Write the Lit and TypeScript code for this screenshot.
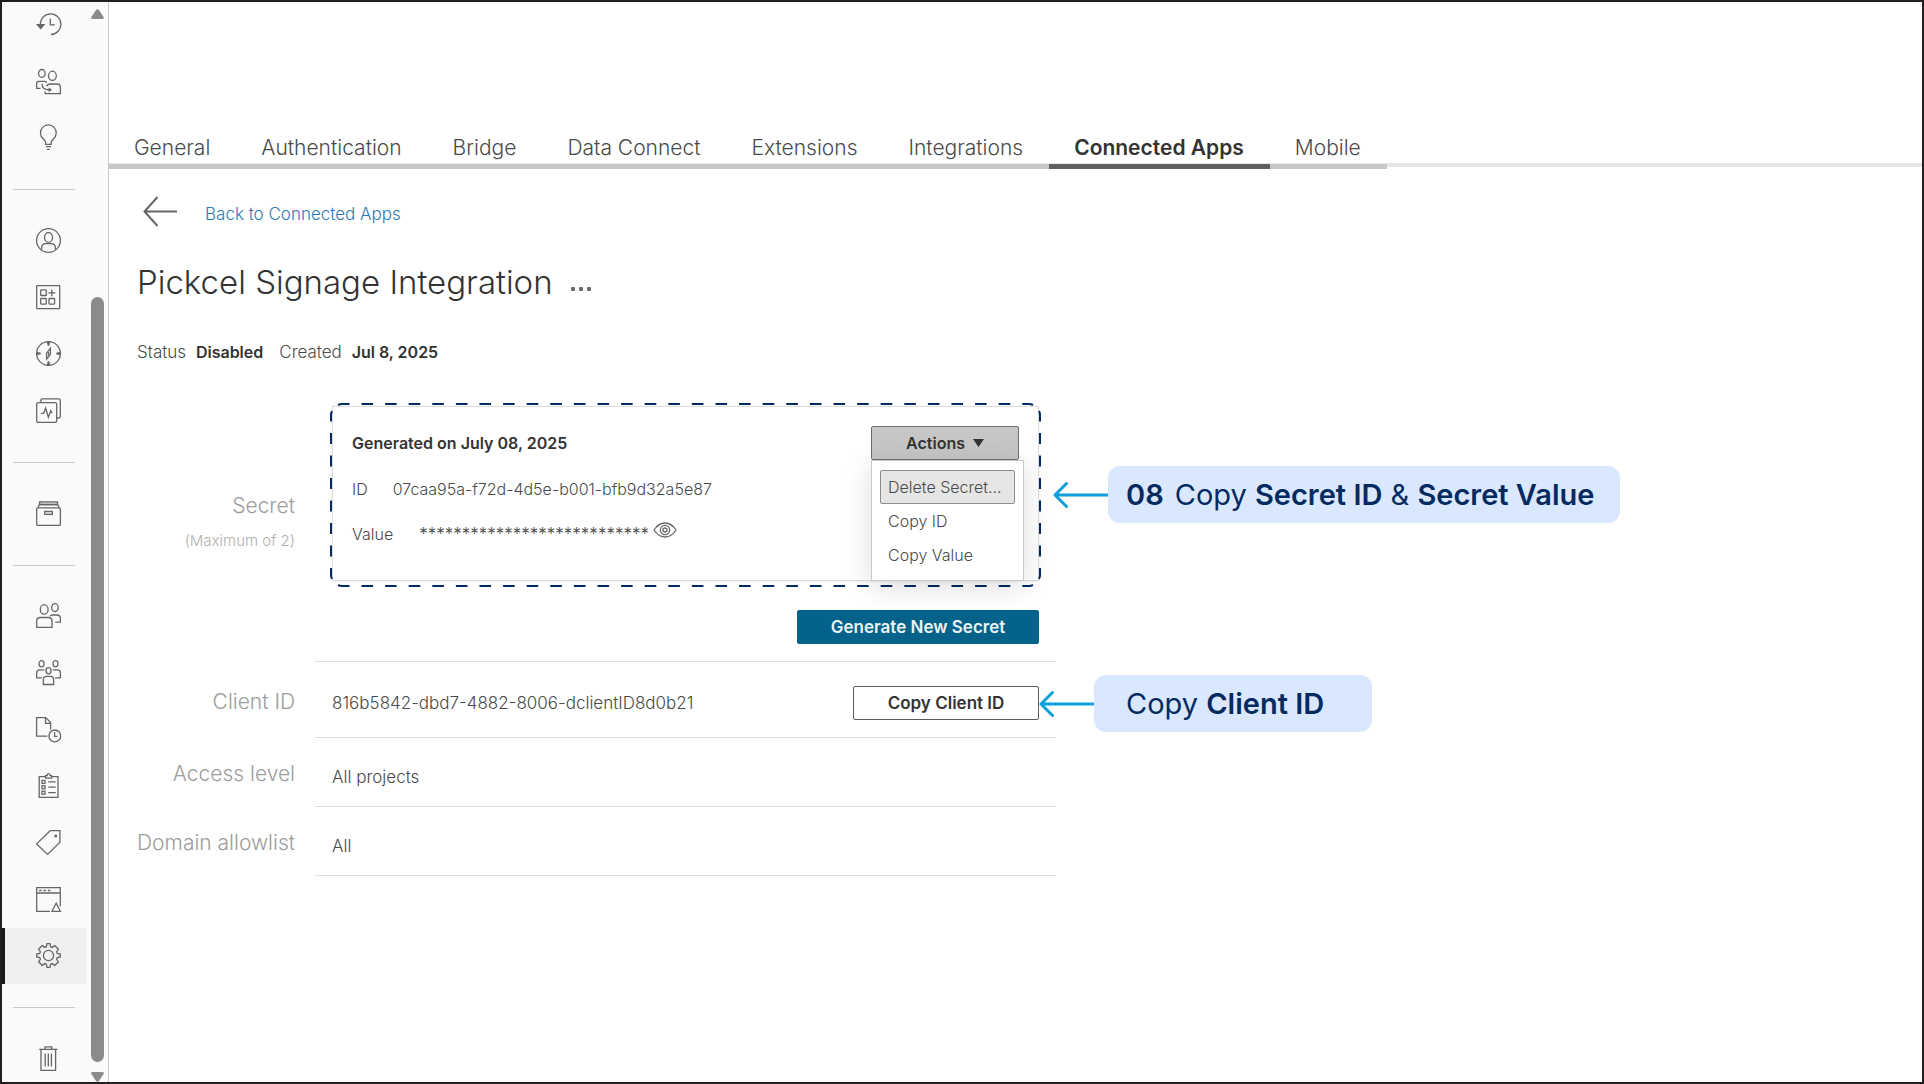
import { LitElement, html, svg, css, nothing, type TemplateResult } from "lit";
import { customElement, property } from "lit/decorators.js";
import { classMap } from "lit/directives/class-map.js";

const icons: Record<string, TemplateResult> = {
  recents: svg`<path d="M4.3 12A10.3 10.3 0 1 1 15 22.5M14.3 6.5v6.3h4.6"/><path class="solid" d="M0 12h9.4l-4.7 5.6z"/>`,
  shared: svg`<ellipse cx="5.8" cy="4.4" rx="3.3" ry="3.9"/><ellipse cx="16.4" cy="6.8" rx="3.9" ry="4.6"/><path d="M4.6 19.4H.6v-4.6q0-2.4 2.4-2.4h5.6q1.6 0 2.2 1.2M6.1 14.6Q5.6 20.8 13.6 20.8M10.6 17.2q.8-2.2 3.6-2.2h6.8q3.4 0 3.4 3.4v6.3H9.2v-2.3"/><path class="solid" d="M12.6 18.4l3.6 2.4-3.6 2.4z"/>`,
  bulb: svg`<path d="M9.6 19.3h5.6v-2.1q.3-1.4 2.3-3.4a7.9 7.9 0 1 0-10.3 0q2.1 2 2.4 3.4zM9.8 21.7h5.2M11 24.3h2.8"/>`,
  user: svg`<circle cx="12.5" cy="12.5" r="11.9"/><ellipse cx="12.5" cy="9.4" rx="4" ry="4.9"/><path d="M5.6 21.8v-1.9q0-4.2 4.2-4.2h5.4q4.2 0 4.2 4.2v1.9"/>`,
  collections: svg`<rect x=".7" y=".7" width="23" height="23" rx=".6"/><rect x="4.7" y="4.9" width="5.6" height="5.6" rx=".5"/><rect x="4.7" y="13.5" width="5.6" height="5.6" rx=".5"/><rect x="13" y="13.5" width="5.6" height="5.6" rx=".5"/><path d="M12.4 7.8h6.9M15.8 4.4v6.8"/>`,
  compass: svg`<circle cx="12.5" cy="12.5" r="11.9"/><path d="M14.3 7.3l.2 5.9-3.8 4.7-.2-5.8zM12.5 11v3.2"/><path class="solid" d="M10.7.6h3.6l-1 4.2h-1.6zM10.7 24.4h3.6l-1-4.2h-1.6zM.6 10.7v3.6l4.2-1v-1.6zM24.4 10.7v3.6l-4.2-1v-1.6z"/>`,
  pulse: svg`<rect x=".7" y="4.6" width="20" height="19.8" rx="1.6"/><path d="M4.9 4.6V2.2Q4.9.8 6.3.8h16.3q1.7 0 1.7 1.7v16q0 1.5-1.6 1.5h-2M5 15.4h2.6l2-5.4 2.8 9.2 2.4-6.4.8 1.8h.8"/>`,
  archive: svg`<rect x=".7" y="6.9" width="23.7" height="17.5" rx="1"/><path d="M2 6.7l1.3-3h18.5l1.3 3"/><path class="tint" d="M3.6.8h17.9v2.7H3.6z"/><rect class="tint" x="8.7" y="10.4" width="7.6" height="3"/>`,
  users: svg`<ellipse cx="8.2" cy="6.4" rx="3.9" ry="4.7"/><ellipse cx="18.9" cy="4.6" rx="3.3" ry="3.9"/><path d="M.7 24.4v-6.3q0-3.6 3.6-3.6h8.1q3.6 0 3.6 3.6v6.3zM13.9 13.3q.7-1.3 2.6-1.3h4.6q3.3 0 3.3 3.3v3.9h-5.2"/>`,
  groups: svg`<ellipse cx="5.5" cy="3.8" rx="2.5" ry="3.1"/><ellipse cx="19.5" cy="3.8" rx="2.5" ry="3.1"/><ellipse cx="12.5" cy="10.8" rx="2.5" ry="3.1"/><path d="M6 17.8H.7v-4.9q0-3 3-3h4.7M19 17.8h5.4v-4.9q0-3-3-3h-4.7M7.4 24.5v-4.7q0-3.4 3.2-3.4h3.8q3.2 0 3.2 3.4v4.7z"/>`,
  schedules: svg`<path d="M11.4 19.2H.6V.6h9.2l4.8 4.9v7M9.5.8v5.6h5"/><circle cx="18.8" cy="18.9" r="5.9"/><path d="M18.6 15v4.3h2.8"/>`,
  tasks: svg`<path d="M9.6 3.6H3.2v20.8h18.8V3.6h-6.5M9.6 5.2V2.6h1.6q0-2 1.4-2t1.4 2h1.6v2.6zM12.2 8.8h7.5M12.2 14.2h7.5M12.2 19.6h7.5"/><rect x="6" y="7.4" width="3" height="3"/><rect x="6" y="12.8" width="3" height="3"/><rect x="6" y="18.2" width="3" height="3"/>`,
  tag: svg`<path d="M14.2.7h9.7v11.5L11.6 24.4.6 13.9z"/><rect class="solid" x="18.4" y="4.7" width="2.6" height="2.6"/>`,
  site: svg`<path d="M13.9 24.3H.7V.7h23.6v18.6M.7 6h23.6M16 24.3l4.2-8.2 4.2 8.2z"/><path stroke-dasharray="2.6 1.8" d="M3 3.5h12.6"/>`,
  settings: svg`<circle cx="12.5" cy="12.5" r="5.1"/><path d="M10.4 3.7L11 .7h3l.6 3 1.6.7 2.6-1.8 3.6 3.6-1.8 2.6.7 1.6 3 .6v3l-3 .6-.7 1.6 1.8 2.6-3.6 3.6-2.6-1.8-1.6.7-.6 3h-3l-.6-3-1.6-.7-2.6 1.8-3.6-3.6 1.8-2.6-.7-1.6-3-.6v-3l3-.6.7-1.6-1.8-2.6 3.6-3.6 2.6 1.8z"/>`,
  trash: svg`<path d="M3.2 3.4h18.2M9 3.2V.9h6.7v2.3M5 3.6v20.8h14.6V3.6M9.2 7.6v12.8M12.3 7.6v12.8M15.4 7.6v12.8"/>`,
};

const railGroups: [string, string][][] = [
  [["recents", "Recents"], ["shared", "Shared with me"], ["bulb", "Recommendations"]],
  [["user", "Personal space"], ["collections", "Collections"], ["compass", "Explore"], ["pulse", "Metrics"]],
  [["archive", "External assets"]],
  [["users", "Users"], ["groups", "Groups"], ["schedules", "Schedules"], ["tasks", "Tasks"], ["tag", "Tags"], ["site", "Site status"], ["settings", "Settings"]],
  [["trash", "Recycle bin"]],
];

const tabs = ["General", "Authentication", "Bridge", "Data Connect", "Extensions", "Integrations", "Connected Apps", "Mobile"];

const base = css`
  *, *::before, *::after { box-sizing: border-box; }
  button { font: inherit; color: inherit; cursor: pointer; margin: 0; }
`;

@customElement("side-rail")
export class SideRail extends LitElement {
  static styles = [base, css`
    :host { display: flex; background: #fafafa; overflow: hidden; }
    .list { display: flex; flex-direction: column; width: 84px; margin: -6px 0 -5px; }
    .item { flex: 1 1 0; min-height: 0; display: flex; align-items: center; justify-content: center;
      padding: 0 0 0 5px; border-left: 3px solid transparent; color: #666; text-decoration: none; }
    .item.current { background: #f0f0f0; border-left-color: #1c1a1a; }
    .item svg { width: 25px; height: 25px; overflow: visible; fill: none; stroke: currentColor; stroke-width: 1.3; }
    .item .solid { fill: currentColor; stroke: none; }
    .item .tint { fill: #ddd; }
    .rule { flex: none; width: 62px; height: 1px; margin: 23px 11px 22px; border: 0; background: #cacaca; }
    .scroll { display: flex; flex-direction: column; align-items: center; width: 22px; padding: 7px 0 0; }
    .scroll svg { width: 13px; height: 10px; flex: none; fill: #8b8b8b; }
    .gap { flex: 278 1 0; }
    .thumb { flex: 765 1 0; width: 13px; border-radius: 7px; background: #8b8b8b; }
    .down { margin-top: 10px; }
  `];

  render() {
    return html`
      <nav class="list" aria-label="Site">
        ${railGroups.map((group, i) => html`
          ${i ? html`<hr class="rule">` : nothing}
          ${group.map(([icon, label]) => html`
            <a class=${classMap({ item: true, current: icon === "settings" })} href="#${icon}" aria-label=${label}>
              <svg viewBox="0 0 25 25" aria-hidden="true">${icons[icon]}</svg>
            </a>`)}`)}
      </nav>
      <div class="scroll" aria-hidden="true">
        <svg viewBox="0 0 13 10"><path d="M5 1q1.5-1.6 3 0l4.6 7q.8 1.8-1.2 2H1.6q-2-.2-1.2-2z"/></svg>
        <div class="gap"></div>
        <div class="thumb"></div>
        <svg class="down" viewBox="0 0 13 10"><path d="M5 9q1.5 1.6 3 0l4.6-7q.8-1.8-1.2-2H1.6Q-.4.2.4 2z"/></svg>
      </div>`;
  }
}

@customElement("call-out")
export class CallOut extends LitElement {
  @property({ type: Boolean, reflect: true }) wide = false;
  static styles = [base, css`
    :host { display: flex; align-items: center; white-space: nowrap; }
    svg { width: 55px; height: 28px; fill: none; stroke: #0d9fdc; stroke-width: 3; stroke-linecap: round; stroke-linejoin: round; }
    .bubble { padding: 10px 26px 10px 18px; border-radius: 12px; background: #dae8ff; color: #032b60; font-size: 29px; line-height: 37px; font-weight: 400; }
    :host([wide]) .bubble { padding: 10px 48px 10px 32px; }
  `];
  render() {
    return html`
      <svg viewBox="0 0 55 28" aria-hidden="true"><path d="M55 14H2M13.5 2.5L2 14l11.5 11.5"/></svg>
      <div class="bubble"><slot></slot></div>`;
  }
}

@customElement("app-root")
export class AppRoot extends LitElement {
  static styles = [base, css`
    :host { display: flex; min-height: 100vh; box-sizing: border-box; border: 2px solid #231f20; background: #fff;
      color: #4a4a4a; font: 300 16px/24px Inter, "Liberation Sans", sans-serif; }
    b { font-weight: 600; color: #333; }
    side-rail { flex: none; contain: size; width: 106px; }
    main { flex: 1; min-width: 0; border-left: 1px solid #c8c8c8; padding-top: 130px; }

    .tabs { display: flex; background: linear-gradient(#e5e5e5, #e5e5e5) 0 31px / 100% 4px no-repeat; }
    .tab { padding: 1px 26px 1px 25px; border: 0; border-bottom: 5px solid #c8c8c8; background: none; font-size: 21px; line-height: 30px; font-weight: 300; }
    .tab.current { font-weight: 600; color: #333; border-bottom-color: #5f5f5f; }

    .body { padding: 25px 28px 0; }
    .back { display: flex; align-items: center; gap: 28px; width: max-content; margin-left: 6px; height: 40px; font-size: 17px; color: #2b7bb0; text-decoration: none; }
    .back svg { width: 34px; height: 36px; fill: none; stroke: #666; stroke-width: 2; }
    .title { display: flex; align-items: center; gap: 18px; margin-top: 28px; }
    h1 { margin: 0; font-size: 33px; line-height: 40px; font-weight: 300; color: #333; }
    .more { padding: 14px 0 0; border: 0; background: none; display: flex; gap: 4px; }
    .more i { width: 4px; height: 4px; border-radius: 1px; background: #6a6a6a; }
    .status { display: flex; margin-top: 38px; gap: 16px; font-size: 17px; }
    .status b { margin-left: 5px; font-size: 16px; }

    dl { margin: 39px 0 0; display: grid; grid-template-columns: minmax(157px, max-content) minmax(0, 741px); column-gap: 20px; }
    dt { padding-top: 21px; text-align: right; font-size: 21px; line-height: 30px; color: #9c9c9c; }
    dt small { display: block; margin-top: 9px; font-size: 15px; line-height: 22px; color: #b0b0b0; }
    dd { margin: 0; padding: 22px 17px 12px; border-bottom: 1px solid #dedede; font-size: 17px; line-height: 34px; }
    .tall { padding-top: 88px; }
    dt.client { padding-top: 25px; }
    dd.client { position: relative; display: flex; justify-content: space-between; padding-top: 24px; padding-bottom: 17px; }
    dd.secret { padding-top: 3px; padding-bottom: 17px; font-size: 16px; }

    .card { position: relative; height: 175px; padding: 19px 19px 0; border: 1px solid #dcdcdc; box-shadow: 0 1px 2px rgba(0,0,0,.06); line-height: 24px; }
    .dashes { position: absolute; left: -3px; top: -4px; width: 711px; height: 184px; fill: none; stroke: #032b60; stroke-width: 2; }
    .head { display: flex; justify-content: space-between; height: 34px; line-height: 34px; }
    .field { display: flex; align-items: center; margin-top: 10px; height: 38px; }
    .field + .field { margin-top: 7px; }
    .id { margin-left: 25px; }
    .mask { margin-left: 26px; font-size: 17px; }
    .eye { display: flex; margin: -8px 0 0 4px; padding: 0; border: 0; background: none; }
    .eye svg { width: 24px; height: 16px; fill: none; stroke: #666; stroke-width: 1.3; }

    .actions { position: relative; }
    .btn { height: 34px; padding: 0; border: 1px solid #5c5c5c; border-radius: 2px; background: #fff; color: #333; font-size: 17px; line-height: 30px; font-weight: 600; }
    .menu-btn { display: flex; align-items: center; justify-content: center; gap: 8px; width: 148px; border-color: #6e6e6e; background: #c6c6c6; font-size: 16px; }
    .menu-btn svg { width: 11px; height: 8px; fill: #333; }
    .menu { position: absolute; left: 0; top: 100%; width: 153px; height: 121px; margin: 0; padding: 9px 8px 0; border: 1px solid #c8c8c8; background: #fff; box-shadow: 0 6px 26px rgba(0,0,0,.14); }
    .menu button { display: block; width: 100%; height: 34px; padding: 0 7px; border: 1px solid transparent; border-radius: 2px; background: none; text-align: left; line-height: 30px; white-space: nowrap; font-weight: 300; }
    .menu .active { background: #e5e5e5; border-color: #8c8c8c; }
    .primary { display: block; width: 242px; margin: 29px 0 0 auto; border-color: #05628a; background: #05628a; color: #eaf3f7; }
    .copy { width: 186px; }
    call-out { position: absolute; left: 100%; }
    .card call-out { margin-left: 15px; top: 59px; }
    .client call-out { margin-left: -17px; top: 13px; }
    call-out b { font-weight: 600; color: inherit; }
    .step { margin-right: 11px; }
  `];

  render() {
    return html`
      <side-rail></side-rail>
      <main>
        <div class="tabs" role="tablist">
          ${tabs.map(t => html`<button class=${classMap({ tab: true, current: t === "Connected Apps" })} role="tab" aria-selected=${t === "Connected Apps"}>${t}</button>`)}
        </div>
        <div class="body">
          <a class="back" href="#connected-apps">
            <svg viewBox="0 0 34 36" aria-hidden="true"><path d="M34 15.5H1.5M14.5 1L1.5 15.5l13 14.5"/></svg>
            Back to Connected Apps
          </a>
          <div class="title">
            <h1>Pickcel Signage Integration</h1>
            <button class="more" aria-label="More actions"><i></i><i></i><i></i></button>
          </div>
          <div class="status"><span>Status <b>Disabled</b></span><span>Created <b>Jul 8, 2025</b></span></div>
          <dl>
            <dt class="tall">Secret<small>(Maximum of 2)</small></dt>
            <dd class="secret">
              <div class="card">
                <svg class="dashes" viewBox="0 0 711 184" preserveAspectRatio="none" aria-hidden="true">
                  <path stroke-dasharray="11.6 12" d="M8 2q2-1 4-1H699q2 0 4 1"/>
                  <path stroke-dasharray="11.6 12" d="M8 182q2 1 4 1H699q2 0 4-1"/>
                  <path stroke-dasharray="11 11.5" d="M2 176q-1-2-1-4V12q0-2 1-4"/>
                  <path stroke-dasharray="11 11.5" d="M709 176q1-2 1-4V12q0-2-1-4"/>
                </svg>
                <div class="head">
                  <b>Generated on July 08, 2025</b>
                  <div class="actions">
                    <button class="btn menu-btn" aria-haspopup="menu" aria-expanded="true">Actions
                      <svg viewBox="0 0 11 8" aria-hidden="true"><path d="M0 0h11L5.5 8z"/></svg>
                    </button>
                    <div class="menu" role="menu">
                      <button class="active" role="menuitem">Delete Secret...</button>
                      <button role="menuitem">Copy ID</button>
                      <button role="menuitem">Copy Value</button>
                    </div>
                  </div>
                </div>
                <div class="field">ID<span class="id">07caa95a-f72d-4d5e-b001-bfb9d32a5e87</span></div>
                <div class="field">Value<span class="mask">***************************</span>
                  <button class="eye" aria-label="Show value">
                    <svg viewBox="0 0 24 16" aria-hidden="true"><path d="M1 8Q5.5 1 12 1t11 7q-4.5 7-11 7T1 8z"/><circle cx="12" cy="8" r="4.6"/><circle cx="12" cy="8" r="2"/></svg>
                  </button>
                </div>
                <call-out><b class="step">08</b>Copy <b>Secret ID</b> &amp; <b>Secret Value</b></call-out>
              </div>
              <button class="btn primary">Generate New Secret</button>
            </dd>
            <dt class="client">Client ID</dt>
            <dd class="client">
              <span>816b5842-dbd7-4882-8006-dclientID8d0b21</span>
              <button class="btn copy">Copy Client ID</button>
              <call-out wide>Copy <b>Client ID</b></call-out>
            </dd>
            <dt>Access level</dt>
            <dd>All projects</dd>
            <dt>Domain allowlist</dt>
            <dd>All</dd>
          </dl>
        </div>
      </main>`;
  }
}
